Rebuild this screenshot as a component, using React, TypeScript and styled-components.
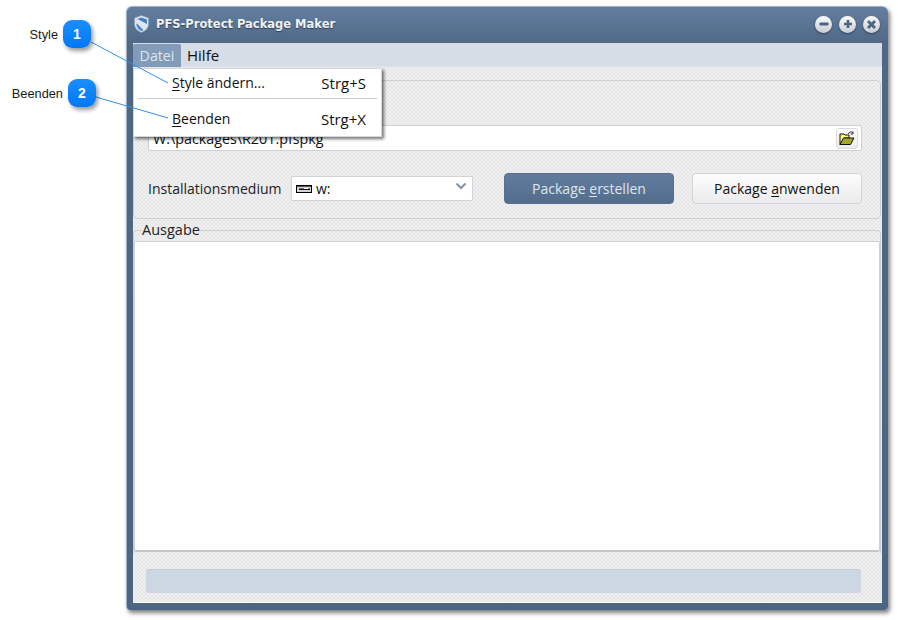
import React from "react";
import styled, { createGlobalStyle } from "styled-components";

const Global = createGlobalStyle`
  html, body { margin: 0; padding: 0; background: #fff; }
  #root { width: 898px; height: 620px; overflow: hidden; }
`;

const uiFont = `"Open Sans", "Noto Sans", sans-serif`;
const texture = `
  background-color: #ebebed;
  background-image: conic-gradient(#e7e7e9 25%, #efeff0 0 50%, #e7e7e9 0 75%, #efeff0 0);
  background-size: 4px 4px;
`;

const Page = styled.div`
  position: relative;
  width: 898px;
  height: 620px;
  padding: 6px 0 0 126px;
  box-sizing: border-box;
  background: #fff;
`;

const Window = styled.div`
  width: 762px;
  height: 604px;
  box-sizing: border-box;
  padding: 0 6px 7px 6px;
  display: flex;
  flex-direction: column;
  border-radius: 6px 6px 4px 4px;
  background: linear-gradient(#637e9f 0, #4f6886 37px, #4c6584 100%);
  border: 1px solid #9fb0c4;
  border-width: 1px 0 0 1px;
  box-shadow: 2px 3px 4px rgba(0, 0, 0, 0.5);
`;

const TitleBar = styled.div`
  height: 36px;
  flex: none;
  display: flex;
  align-items: center;
  gap: 7px;
  padding: 0 2px 2px 1px;
  box-sizing: border-box;
`;

const Title = styled.span`
  flex: 1;
  font: bold 11.5px "DejaVu Sans", sans-serif;
  color: #eef2f7;
  text-shadow: 0 1px 1px rgba(0, 0, 0, 0.45);
`;

const WindowControls = styled.div`
  display: flex;
  gap: 7px;
`;

const WindowButton = styled.div`
  width: 17px;
  height: 17px;
  border-radius: 50%;
  display: flex;
  align-items: center;
  justify-content: center;
  background: linear-gradient(#fafafa, #c9ced5);
  box-shadow: 0 1px 2px rgba(0, 0, 0, 0.45);
`;

const MenuBar = styled.div`
  position: relative;
  height: 24px;
  flex: none;
  display: flex;
  background: #d6dde6;
  border-bottom: 1px solid #dfe4ea;
  box-sizing: border-box;
  z-index: 2;
`;

const MenuItem = styled.div<{ $active?: boolean }>`
  width: ${(p) => (p.$active ? "48px" : "auto")};
  height: 23px;
  margin-top: 1px;
  box-sizing: border-box;
  padding: 0 6px 1px;
  display: flex;
  align-items: center;
  justify-content: center;
  font: ${(p) => (p.$active ? "14.2px" : "15px")} ${uiFont};
  color: ${(p) => (p.$active ? "#dde5ee" : "#111")};
  background: ${(p) => (p.$active ? "#829bb9" : "transparent")};
  border-radius: 2px 2px 0 0;
`;

const Popup = styled.div`
  position: absolute;
  left: 0;
  top: 25px;
  width: 249px;
  height: 69px;
  box-sizing: border-box;
  display: flex;
  flex-direction: column;
  padding: 0 4px;
  background: #fff;
  border: 1px solid #d4d8dd;
  box-shadow: 2px 2px 3px rgba(0, 0, 0, 0.55);
`;

const PopupRow = styled.div<{ $first?: boolean }>`
  ${(p) => (p.$first ? "height: 29px; flex: none; padding-bottom: 2px;" : "flex: 1; padding-top: 2px;")}
  box-sizing: border-box;
  display: flex;
  align-items: center;
  justify-content: space-between;
  padding-left: 34px;
  padding-right: 11px;
  font: 14px ${uiFont};
  color: #111;
`;

const Shortcut = styled.span`
  font-size: 15px;
`;

const PopupSeparator = styled.div`
  height: 1px;
  flex: none;
  background: #c9cbce;
`;

const Mnemonic = styled.span`
  text-decoration: underline;
  text-underline-offset: 2px;
  text-decoration-thickness: 1px;
`;

const Client = styled.div`
  flex: 1;
  min-height: 0;
  display: flex;
  flex-direction: column;
  padding: 13px 1px 0 0;
  ${texture}
  border-bottom: 1px solid #fff;
`;

const TopGroup = styled.section`
  flex: none;
  height: 139px;
  box-sizing: border-box;
  padding: 44px 18px 14px 14px;
  display: flex;
  flex-direction: column;
  gap: 22px;
  border: 1px solid #cfcfd2;
  border-radius: 4px;
`;

const PathField = styled.div`
  height: 27px;
  box-sizing: border-box;
  display: flex;
  align-items: center;
  justify-content: space-between;
  padding: 0 3px 0 4px;
  background: #fff;
  border: 1px solid #d0d0d3;
  border-radius: 2px;
  font: 14.3px ${uiFont};
  color: #111;
`;

const IconButton = styled.div`
  width: 22px;
  height: 21px;
  display: flex;
  align-items: center;
  justify-content: center;
  background: linear-gradient(#fff, #ececee);
  border: 1px solid #dcdcde;
  border-radius: 3px;
  box-sizing: border-box;
`;

const ActionRow = styled.div`
  display: flex;
  align-items: center;
  height: 31px;
`;

const FieldLabel = styled.span`
  width: 143px;
  flex: none;
  font: 14px ${uiFont};
  color: #222;
`;

const Combo = styled.div`
  width: 182px;
  height: 25px;
  flex: none;
  box-sizing: border-box;
  display: flex;
  align-items: center;
  gap: 4px;
  padding: 0 5px 0 4px;
  background: #fff;
  border: 1px solid #d4d4d7;
  border-radius: 2px;
  font: 14px ${uiFont};
  color: #111;
`;

const ComboValue = styled.span`
  flex: 1;
`;

const Button = styled.div<{ $primary?: boolean }>`
  width: 170px;
  height: 31px;
  flex: none;
  box-sizing: border-box;
  display: flex;
  align-items: center;
  justify-content: center;
  margin-left: ${(p) => (p.$primary ? "31px" : "18px")};
  font: 14px ${uiFont};
  border-radius: 4px;
  color: ${(p) => (p.$primary ? "#dfe6ef" : "#111")};
  background: ${(p) =>
    p.$primary ? "linear-gradient(#617c9e, #536d8d)" : "linear-gradient(#fdfdfd, #ebebed)"};
  border: 1px solid ${(p) => (p.$primary ? "#56708f" : "#d4d4d7")};
`;

const OutputGroup = styled.fieldset`
  flex: none;
  margin: 4px 0 0;
  padding: 4px 0 0 0;
  min-width: 0;
  height: 330px;
  box-sizing: border-box;
  border: 1px solid #cfcfd2;
  border-bottom: none;
  border-radius: 4px 4px 0 0;
`;

const OutputLegend = styled.legend`
  margin-left: 8px;
  padding: 0;
  font: 14.5px/14px ${uiFont};
  color: #222;
`;

const OutputBox = styled.div`
  height: 308px;
  background: #fff;
  border: 1px solid #cfcfd2;
  border-bottom: 2px solid #c6c6c9;
  border-radius: 2px;
`;

const Footer = styled.div`
  flex: 1;
  display: flex;
  align-items: flex-start;
  padding: 16px 20px 0 13px;
`;

const Progress = styled.div`
  flex: 1;
  height: 24px;
  background: #cdd7e2;
  border-radius: 3px;
  box-shadow: inset 0 1px 0 #c3cedb;
`;

const CalloutLayer = styled.svg`
  position: absolute;
  inset: 0;
  z-index: 3;
  pointer-events: none;
`;

const Badge = styled.div<{ $x: number; $y: number }>`
  position: absolute;
  left: ${(p) => p.$x}px;
  top: ${(p) => p.$y}px;
  width: 28px;
  height: 28px;
  z-index: 4;
  display: flex;
  align-items: center;
  justify-content: center;
  border-radius: 9px;
  background: linear-gradient(#1b8fff, #0078f5);
  box-shadow: 2px 3px 4px rgba(0, 0, 0, 0.4);
  color: #fff;
  font: bold 14px "Liberation Sans", sans-serif;
`;

const CalloutLabel = styled.span<{ $right: number; $y: number }>`
  position: absolute;
  right: ${(p) => 898 - p.$right}px;
  top: ${(p) => p.$y}px;
  font: 12.8px/15px "Liberation Sans", sans-serif;
  color: #1a1a1a;
`;

const ShieldIcon = () => (
  <svg width="15" height="18" viewBox="0 0 15 18">
    <path d="M7.5 .5 14.5 3v6c0 4-3 7-7 8.5C3.500 16 .5 13 .5 9V3z" fill="#dfe5ec" stroke="#8fa0b4" strokeWidth=".6" />
    <path d="M2 4.500 7.500 2.500 13 4.500v4.500L4 4.200z" fill="#3f82c9" />
    <path d="M3 8.500 9.500 15c-.6.500-1.300.900-2 1.200C4.500 15 2.500 12 2.300 9z" fill="#4a8bd0" />
  </svg>
);

const MinusIcon = () => (
  <svg width="12" height="12" viewBox="0 0 12 12">
    <rect x="1.500" y="4.500" width="9" height="3" rx=".8" fill="#4d6585" />
  </svg>
);
const PlusIcon = () => (
  <svg width="12" height="12" viewBox="0 0 12 12">
    <path d="M4.700 2h2.600v2.700H10v2.600H7.300V10H4.700V7.300H2V4.700h2.700z" fill="#4d6585" />
  </svg>
);
const CloseIcon = () => (
  <svg width="13" height="13" viewBox="0 0 13 13">
    <path d="M2 4 4 2l2.500 2.500L9 2l2 2-2.500 2.500L11 9l-2 2-2.500-2.500L4 11 2 9l2.500-2.500z" fill="#4d6585" />
  </svg>
);

const FolderIcon = () => (
  <svg width="16" height="15" viewBox="0 0 16 15">
    <path d="M1 3h4l1 1h4v3H5L1 13.500z" fill="#ffff70" stroke="#111" strokeWidth="1" />
    <path d="M1 13.500 4.500 7H15l-3.500 6.500z" fill="#a8a62a" stroke="#111" strokeWidth="1" />
    <path d="M9 3c1-2 3-2.500 5-1.500M14 .5v2.500h-2.500" fill="none" stroke="#333" strokeWidth="1" />
  </svg>
);

const DriveIcon = () => (
  <svg width="16" height="8" viewBox="0 0 16 8">
    <rect x=".5" y=".5" width="15" height="7" fill="#d4d4d4" stroke="#000" />
    <rect x="1" y="1" width="14" height="1" fill="#555" />
    <rect x="3" y="3.500" width="11" height="1.500" fill="#111" />
    <rect x="8" y="3" width="4" height="1" fill="#fff" />
  </svg>
);

const ChevronWrap = styled.span`
  display: flex;
  margin-bottom: 5px;
`;

const Chevron = () => (
  <ChevronWrap>
    <svg width="12" height="8" viewBox="0 0 12 8">
      <path d="M1.500 1.500 6 6l4.500-4.500" fill="none" stroke="#7e94ae" strokeWidth="2" />
    </svg>
  </ChevronWrap>
);

export default function App() {
  return (
    <Page>
      <Global />
      <Window>
        <TitleBar>
          <ShieldIcon />
          <Title>PFS-Protect Package Maker</Title>
          <WindowControls>
            <WindowButton><MinusIcon /></WindowButton>
            <WindowButton><PlusIcon /></WindowButton>
            <WindowButton><CloseIcon /></WindowButton>
          </WindowControls>
        </TitleBar>
        <MenuBar>
          <MenuItem $active>Datei</MenuItem>
          <MenuItem>Hilfe</MenuItem>
          <Popup>
            <PopupRow $first>
              <span><Mnemonic>S</Mnemonic>tyle ändern...</span>
              <Shortcut>Strg+S</Shortcut>
            </PopupRow>
            <PopupSeparator />
            <PopupRow>
              <span><Mnemonic>B</Mnemonic>eenden</span>
              <Shortcut>Strg+X</Shortcut>
            </PopupRow>
          </Popup>
        </MenuBar>
        <Client>
          <TopGroup>
            <PathField>
              <span>W:\packages\R201.pfspkg</span>
              <IconButton><FolderIcon /></IconButton>
            </PathField>
            <ActionRow>
              <FieldLabel>Installationsmedium</FieldLabel>
              <Combo>
                <DriveIcon />
                <ComboValue>w:</ComboValue>
                <Chevron />
              </Combo>
              <Button $primary>Package&nbsp;<Mnemonic>e</Mnemonic>rstellen</Button>
              <Button>Package&nbsp;<Mnemonic>a</Mnemonic>nwenden</Button>
            </ActionRow>
          </TopGroup>
          <OutputGroup>
            <OutputLegend>Ausgabe</OutputLegend>
            <OutputBox />
          </OutputGroup>
          <Footer>
            <Progress />
          </Footer>
        </Client>
      </Window>
      <CalloutLayer width="898" height="620" viewBox="0 0 898 620">
        <path d="M91 42 168 83M96 97 168 118" stroke="#2f92ee" strokeWidth="1" fill="none" />
      </CalloutLayer>
      <CalloutLabel $right={58} $y={27}>Style</CalloutLabel>
      <Badge $x={63} $y={20}>1</Badge>
      <CalloutLabel $right={63} $y={86}>Beenden</CalloutLabel>
      <Badge $x={68} $y={79}>2</Badge>
    </Page>
  );
}
